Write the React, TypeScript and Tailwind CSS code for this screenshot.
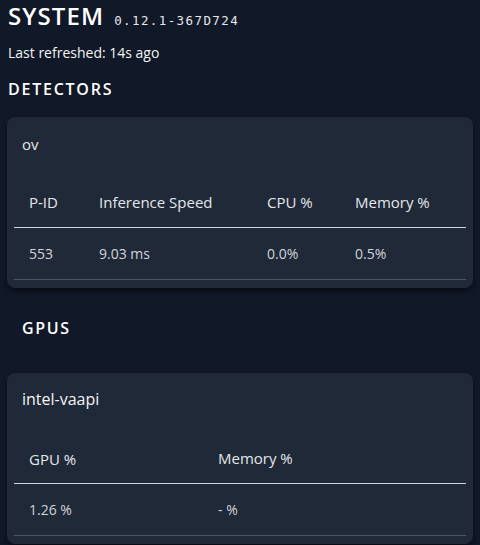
const detectors = [
  { name: 'ov', pid: '553', speed: '9.03 ms', cpu: '0.0%', mem: '0.5%' },
]

const gpus = [{ name: 'intel-vaapi', gpu: '1.26 %', mem: '- %' }]

export default function App() {
  return (
    <div
      className="min-h-[545px] w-[480px] overflow-hidden bg-[#111827] text-white"
      style={{ fontFamily: '"Open Sans", "Noto Sans", sans-serif' }}
    >
      <div className="flex items-baseline gap-[10px] px-2 pt-[1px]">
        <h1 className="text-[24px] font-semibold leading-[30px] tracking-[0.045em]">SYSTEM</h1>
        <span
          className="text-[12.5px] tracking-[1.4px] text-gray-200"
          style={{ fontFamily: '"DejaVu Sans Mono", monospace' }}
        >
          0.12.1-367D724
        </span>
      </div>

      <p className="mt-[12px] px-2 text-[14px] leading-5 text-gray-100">Last refreshed: 14s ago</p>

      <h2 className="mt-[16px] px-2 text-[16px] font-semibold leading-5 tracking-[0.11em]">DETECTORS</h2>

      {detectors.map((d) => (
        <div key={d.name} className="mx-[7px] mt-[18px] rounded-lg bg-[#1f2937] px-[7px] pb-2 pt-[17px] shadow-md shadow-black/40">
          <div className="px-[8px] text-[15px] leading-5 text-gray-200">{d.name}</div>
          <table className="mt-[23px] w-full table-fixed text-left text-[14px]">
            <thead>
              <tr className="border-b border-gray-300 text-[15px] text-gray-200">
                <th className="w-[70px] px-[15px] pb-[13px] pt-[14px] font-medium">P-ID</th>
                <th className="w-[168px] px-[15px] font-medium">Inference Speed</th>
                <th className="w-[88px] px-[15px] font-normal">CPU %</th>
                <th className="px-[15px] font-medium">Memory %</th>
              </tr>
            </thead>
            <tbody>
              <tr className="border-b border-gray-600 text-gray-300">
                <td className="px-[15px] py-[15px]">{d.pid}</td>
                <td className="px-[15px]">{d.speed}</td>
                <td className="px-[15px]">{d.cpu}</td>
                <td className="px-[15px]">{d.mem}</td>
              </tr>
            </tbody>
          </table>
        </div>
      ))}

      <h2 className="mt-[30px] px-[22px] text-[16px] font-semibold leading-5 tracking-widest">GPUS</h2>

      {gpus.map((g) => (
        <div key={g.name} className="mx-[7px] mt-[35px] rounded-lg bg-[#1f2937] px-[7px] pb-2 pt-[14px] shadow-md shadow-black/40">
          <div className="px-[8px] text-[16px] leading-6 text-gray-100">{g.name}</div>
          <table className="mt-[23px] w-full table-fixed text-left text-[14px]">
            <thead>
              <tr className="border-b border-gray-300 text-[15px] text-gray-200">
                <th className="w-[189px] px-[15px] pb-[13px] pt-[14px] font-normal">GPU %</th>
                <th className="px-[15px] font-medium">Memory %</th>
              </tr>
            </thead>
            <tbody>
              <tr className="border-b border-gray-600 text-gray-300">
                <td className="px-[15px] py-[15px]">{g.gpu}</td>
                <td className="px-[15px]">{g.mem}</td>
              </tr>
            </tbody>
          </table>
        </div>
      ))}
    </div>
  )
}
